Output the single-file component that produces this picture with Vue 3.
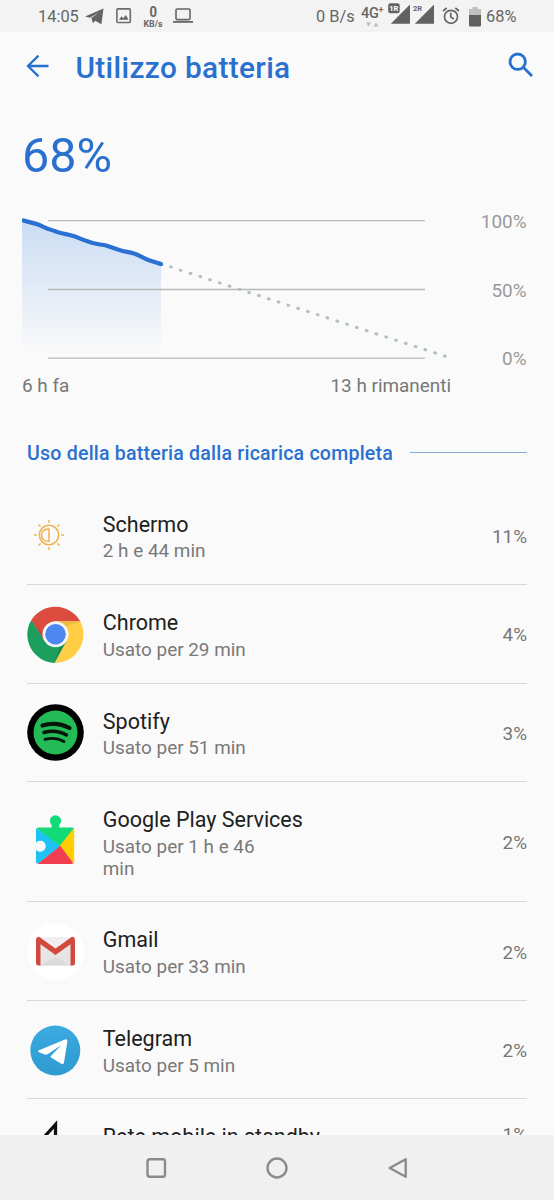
<script setup>
const apps = [
  { icon: 'screen', name: 'Schermo', detail: '2 h e 44 min', share: '11%' },
  { icon: 'chrome', name: 'Chrome', detail: 'Usato per 29 min', share: '4%' },
  { icon: 'spotify', name: 'Spotify', detail: 'Usato per 51 min', share: '3%' },
  { icon: 'play', name: 'Google Play Services', detail: 'Usato per 1 h e 46 min', share: '2%' },
  { icon: 'gmail', name: 'Gmail', detail: 'Usato per 33 min', share: '2%' },
  { icon: 'telegram', name: 'Telegram', detail: 'Usato per 5 min', share: '2%' },
  { icon: 'cell', name: 'Rete mobile in standby', detail: '', share: '1%' },
]
</script>

<template>
  <div class="screen">
    <div class="status">
      <span class="st-text time">14:05</span>
      <svg class="s-tg" width="19" height="17" viewBox="0 0 19 17"><path d="M0 8.6 18.5.5 16.4 16.3 10.2 12.8 8 15.200 6.600 10.800 14.400 4.300 5 9.800z" fill="#636363" /><path d="M6 10.200 15.500 3.500 8.500 12z" fill="#636363" /></svg>
      <svg class="s-pic" width="16" height="16" viewBox="0 0 16 16"><rect x=".9" y=".9" width="13.4" height="13.6" rx="1" fill="none" stroke="#6b6b6b" stroke-width="1.6" /><path d="M3 11.8 5.5 8.3 7.2 10.2 9.8 7 12.5 11.8z" fill="#666" /></svg>
      <div class="s-kb"><b class="num">0</b><b class="unit">KB/s</b></div>
      <svg class="s-lap" width="20" height="16" viewBox="0 0 20 16"><rect x="3" y="1" width="14" height="10.6" rx="1" fill="none" stroke="#666" stroke-width="1.6" /><path d="M0 13h20v1.8H0z" fill="#666" /></svg>
      <span class="st-text speed">0 B/s</span>
      <div class="s-4g"><span>4G<sup>+</sup></span><svg width="14" height="5" viewBox="0 0 14 5"><path d="M1 .5h5L3.5 4.5zM8.5 4.5h5L11 .5z" fill="#bdbdbd" /></svg></div>
      <svg class="s-sig" width="47" height="22" viewBox="0 0 47 22">
        <path d="M22 1.5V20.8H2.8zM46 1.5V20.8H26.8z" fill="#626262" />
        <rect x="-.5" y="-.2" width="13" height="11.2" rx="2.5" fill="#f3f3f3" />
        <rect x=".2" y=".2" width="11.5" height="10" rx="2.2" fill="#636363" />
        <text x="1.3" y="8.2" class="sim" fill="#fff">1R</text><text x="25" y="7.8" class="sim" fill="#666">2R</text>
      </svg>
      <svg class="s-al" width="18" height="18" viewBox="0 0 18 18" fill="none" stroke="#666" stroke-width="1.7"><circle cx="9" cy="9.8" r="6.5" /><path d="M8.8 5.8V10l3 2M1 4 4.7 1M17 4 13.3 1" /></svg>
      <svg class="s-bat" width="12" height="20" viewBox="0 0 12 20"><path d="M3.5 0h5v2H12v7H0V2h3.5z" fill="#bfbfbf" /><path d="M0 8h12v10.5q0 1-1 1H1q-1 0-1-1z" fill="#606060" /></svg>
      <span class="st-text">68%</span>
    </div>

    <header class="bar">
      <svg class="back" width="24" height="24" viewBox="0 0 24 24" fill="none" stroke="#2a70cf" stroke-width="2.3"><path d="M22.5 12H2.5M12.500 1.600 2 12l10.500 10.400" /></svg>
      <h1>Utilizzo batteria</h1>
      <svg class="search" width="26" height="26" viewBox="0 0 26 26" fill="none" stroke="#2a70cf" stroke-width="2.800"><circle cx="9.700" cy="9.700" r="7.700" /><path d="M15.300 15.300 24 24" /></svg>
    </header>

    <section class="summary">
      <div class="level">68%</div>
      <div class="chart">
        <svg width="430" height="150" viewBox="0 0 430 150">
          <defs><linearGradient id="fade" x1="0" y1="0" x2="0" y2="1"><stop offset="0" stop-color="#2a78dc" stop-opacity=".23" /><stop offset="1" stop-color="#2a78dc" stop-opacity="0" /></linearGradient></defs>
          <path d="M0 10 13 14 26 19 41 23 52 26 70 33 82 35 96 40 111 43 121 47 130 50 139 54V145H0z" fill="url(#fade)" />
          <path d="M26 10.700H403M26 79.500H403M26 148.200H403" stroke="#b8b9b9" stroke-width="1.300" />
          <path d="M148.500 56.900 423.500 146.300" fill="none" stroke="#b0bec5" stroke-width="3" stroke-linecap="round" stroke-dasharray=".8 9.490" />
          <path d="M0 10C8 12.500 12 13 16 14.500S24 18.500 28 19.500S36 22.500 41 23.500S49 25 53 26.500S66 32 73 33.500S80 34.500 84 35.500S93 39 99 40.500S107 42 112 43.500S121 48 127 50.300L139 54" fill="none" stroke="#2a70d3" stroke-width="4.200" stroke-linejoin="round" />
          <circle cx="139" cy="54.200" r="2.100" fill="#2a70d3" />
        </svg>
        <div class="ylabels"><span>100%</span><span>50%</span><span>0%</span></div>
      </div>
      <div class="xlabels"><span>6 h fa</span><span>13 h rimanenti</span></div>
    </section>

    <div class="section-head"><h2>Uso della batteria dalla ricarica completa</h2><i></i></div>

    <main class="list">
      <div v-for="a in apps" :key="a.name" class="row" :class="{ compact: !a.detail }">
        <div class="icon">
          <svg v-if="a.icon === 'screen'" class="sun" width="32" height="32" viewBox="0 0 32 32" fill="none" stroke="#edb34f" stroke-width="1.500">
            <circle cx="16" cy="16" r="9.700" /><path d="M16 10v12.200h-1.500a6.100 6.100 0 0 1 0-12.200z" />
            <path d="M16 1v2.800M16 28.200V31M1 16h2.800M28.200 16H31M5.500 5.500l2 2M24.500 24.500l2 2M5.500 26.500l2-2M24.500 7.500l2-2" />
          </svg>
          <svg v-else-if="a.icon === 'chrome'" width="57" height="57" viewBox="0 0 57 57">
            <path d="M4.200 14.200A28.400 28.400 0 0 1 53.300 15.600H28.500L17.500 35z" fill="#db4c3f" />
            <path d="M53.300 15.600A28.400 28.400 0 0 1 27.500 56.900L39.500 35 28.500 15.600z" fill="#ffce44" />
            <path d="M4.200 14.200A28.400 28.400 0 0 0 27.500 56.900L39.500 35H17.500z" fill="#1c9e5c" />
            <path d="M28.500 15.600H53.300L39 20.500z" fill="#c99b2a" opacity=".3" /><path d="M4.200 14.200 17.300 35 16 28z" fill="#7b3a28" opacity=".35" /><path d="M27.500 56.900 39.500 35 34 38z" fill="#0b6a38" opacity=".35" />
            <circle cx="28.500" cy="28.300" r="13" fill="#f5f5f5" /><circle cx="28.500" cy="28.300" r="10.300" fill="#4c88f0" />
          </svg>
          <svg v-else-if="a.icon === 'spotify'" width="57" height="57" viewBox="0 0 57 57">
            <circle cx="28.500" cy="28.500" r="28.300" /><circle cx="28.500" cy="28.500" r="22" fill="#22bb55" />
            <g fill="none" stroke="#07140b" stroke-linecap="round"><path d="M15.500 21.500Q30 17.500 42.500 24" stroke-width="4.200" /><path d="M17 28.500Q29 25 39.500 31" stroke-width="3.500" /><path d="M18 35.300Q28.500 32.500 37 37.500" stroke-width="2.800" /></g>
          </svg>
          <svg v-else-if="a.icon === 'play'" width="57" height="57" viewBox="0 0 57 57">
            <path d="M9.500 14.500Q10.300 13.500 12 13.500H24.700V11a5.600 5.600 0 1 1 7.600 0V13.500H45q1.300 0 2 1L33 33z" fill="#12da76" />
            <path d="M46.500 14.400Q47.200 15 47.200 16.200V47q0 1.500-1 2.500L32.500 32z" fill="#ffce00" />
            <path d="M33 31.500 46.300 49.300q-.7.700-1.800.700H12.500q-1 0-1.700-.5z" fill="#f33d50" />
            <path d="M9 16.200V28.700a5.500 5.500 0 1 1 0 7V48q0 1.300 1.800 1.700L33 32 9.500 14.400Q9 15 9 16.200z" fill="#1fc2f4" />
          </svg>
          <svg v-else-if="a.icon === 'gmail'" width="57" height="57" viewBox="0 0 57 57">
            <circle cx="28.500" cy="28.500" r="28.500" fill="#fff" /><path d="M11 14H46V42.500H11z" fill="#e6e5e5" />
            <path d="M13 42.500 28.500 34 44 42.500z" fill="#dcdada" /><path d="M11 14H46L28.500 27z" fill="#f0efef" />
            <path d="M9 17q0-3 3-3.200L28.500 25.500 45 13.800q3 .2 3 3.200V40q0 2.500-2.500 2.500h-2V21.200L28.500 32 13.500 21.200V42.500h-2Q9 42.500 9 40z" fill="#d2493e" />
          </svg>
          <svg v-else-if="a.icon === 'telegram'" width="57" height="57" viewBox="0 0 57 57">
            <defs><linearGradient id="tg" x1="0" y1="0" x2="0" y2="1"><stop stop-color="#3baae1" /><stop offset="1" stop-color="#2e9bd0" /></linearGradient></defs>
            <circle cx="28.300" cy="28.500" r="25" fill="url(#tg)" /><path d="M12 28.300 38 17.500q2.600-.8 2.400 1.800L37 40.500q-.5 2.600-2.700 1.300L24.300 35.800q-1.300-.8-.2-2L34.500 23 20.500 32.300q-1.200.7-2.500.3L12 30.300q-2-.9 0-2z" fill="#fff" />
          </svg>
          <svg v-else width="57" height="57" viewBox="0 0 57 57"><path d="M9 39 28.500 17.500V39z" fill="none" stroke="#111" stroke-width="3.300" /></svg>
        </div>
        <div class="copy"><div class="name">{{ a.name }}</div><div v-if="a.detail" class="detail">{{ a.detail }}</div></div>
        <div class="share">{{ a.share }}</div>
      </div>
    </main>

    <nav class="nav">
      <svg width="22" height="22" viewBox="0 0 22 22"><rect x="2.500" y="2.200" width="17.500" height="17.500" rx="2" /></svg>
      <svg width="22" height="22" viewBox="0 0 22 22"><circle cx="11" cy="11" r="9.500" /></svg>
      <svg width="22" height="22" viewBox="0 0 22 22"><path d="M18.700 2.200V19.800L2.700 11z" stroke-linejoin="round" /></svg>
    </nav>
  </div>
</template>

<style>
body { margin: 0; background: #fafafa; }
</style>

<style scoped>
.screen { width: 554px; height: 1200px; overflow: hidden; display: flex; flex-direction: column; background: #fafafa; font-family: Roboto, sans-serif; color: #222; }
svg { display: block; flex: none; }
.status { flex: none; height: 32px; background: #f3f3f3; display: grid; grid-template-columns: 47px 31px 27px 30px 143px 45px 27px 54px 27px 17px 1fr; padding-left: 38px; align-items: center; color: #666; white-space: nowrap; box-sizing: border-box; }
.st-text { font-size: 16.400px; line-height: 20px; padding-top: 2px; }
.s-tg, .s-bat { margin-top: 1px; }
.s-kb { display: flex; flex-direction: column; align-items: center; width: 20px; line-height: 1; }
.s-kb .num { font-size: 14.500px; line-height: 15px; transform: scaleX(.9); }
.s-kb .unit { font-size: 8.800px; line-height: 8px; }
.s-4g { font-size: 14.500px; font-weight: 500; line-height: 16px; letter-spacing: -.3px; }
.s-4g span { display: block; }
.s-4g sup { font-size: 9px; line-height: 0; vertical-align: 5px; }
.s-4g svg { margin-left: 4px; }
.s-sig { margin-top: -4px; overflow: visible; }
.sim { font: 700 7.500px Roboto, sans-serif; }
.bar { flex: none; height: 72px; display: flex; align-items: center; padding: 0 20px 0 26px; box-sizing: border-box; }
.back { margin-top: -4px; }
h1 { margin: 0 auto 0 25.500px; font-size: 29.800px; letter-spacing: .35px; font-weight: 500; line-height: 34px; color: #2a70cf; white-space: nowrap; }
.search { margin-top: -6px; }
.summary { flex: none; height: 316px; padding-left: 22px; box-sizing: border-box; }
.level { margin-top: 23px; font-size: 48.500px; line-height: 58px; color: #2a70cf; white-space: nowrap; }
.chart { display: flex; margin-top: 25px; height: 150px; }
.ylabels { width: 74.500px; display: flex; flex-direction: column; justify-content: space-between; align-items: flex-end; font-size: 18.900px; line-height: 22px; color: #999; height: 160px; padding-top: 1px; box-sizing: border-box; }
.xlabels { width: 429px; margin-top: 15px; display: flex; justify-content: space-between; font-size: 18.900px; line-height: 22px; color: #777; }
.section-head { flex: none; height: 66.500px; padding: 22px 27px 0; box-sizing: border-box; display: flex; }
h2 { margin: 0; font-size: 19.600px; letter-spacing: .2px; font-weight: 500; line-height: 24px; color: #2a70cf; white-space: nowrap; }
.section-head i { height: 1px; margin: 10px 0 0 auto; width: 117px; background: #82aed5; }
.list { flex: 1; min-height: 0; overflow: hidden; padding: 0 27px; }
.row { display: flex; align-items: center; min-height: 98.500px; box-sizing: border-box; border-bottom: 1px solid #d8d8d8; }
.icon { width: 57px; height: 57px; flex: none; padding-top: 1px; }
.sun { margin: 12px 0 0 6px; }
.copy { margin-left: 18.800px; padding: 25px 0 21.700px; }
.compact { min-height: 0; }
.compact .copy { padding-bottom: 18px; }
.name { font-size: 21.500px; line-height: 25.300px; margin-bottom: 3.500px; white-space: nowrap; color: #202020; }
.detail { width: 180px; font-size: 18.900px; line-height: 22px; color: #797979; }
.share { margin-left: auto; padding-top: 3px; font-size: 18.900px; line-height: 22px; color: #777; }
.compact .share { padding-top: 0; }
.nav { flex: none; height: 65px; background: #f0f0f0; display: flex; justify-content: center; gap: 99px; align-items: center; }
.nav svg { fill: none; stroke: #8b8b8b; stroke-width: 2.400; }
</style>
